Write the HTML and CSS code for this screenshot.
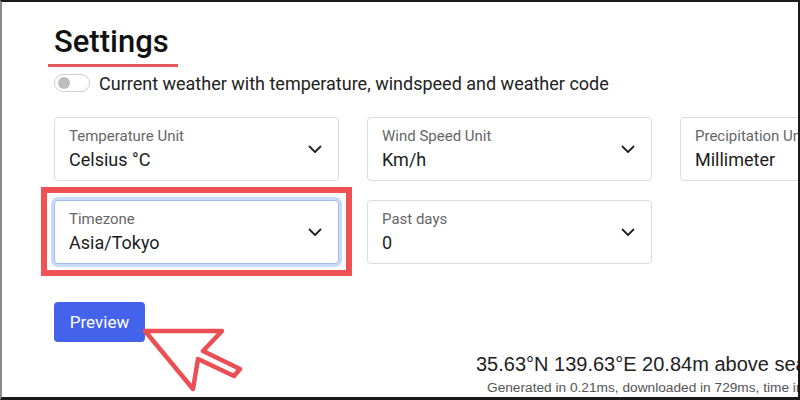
FILE: index.html
```html
<!DOCTYPE html>
<html lang="en">
<head>
<meta charset="utf-8">
<title>Settings</title>
<link rel="stylesheet" href="styles.css">
</head>
<body>
<div class="frame">
  <div class="content">
    <h1 class="title"><span class="title-text">Settings</span></h1>
    <label class="toggle-row">
      <span class="toggle"><span class="knob"></span></span>
      <span class="toggle-label">Current weather with temperature, windspeed and weather code</span>
    </label>
    <div class="grid">
      <div class="field">
        <div class="field-text">
          <span class="field-label">Temperature Unit</span>
          <span class="field-value">Celsius °C</span>
        </div>
        <svg class="chev" width="14" height="9" viewBox="0 0 14 9"><path d="M1.5 1.5 L7 7 L12.5 1.5" fill="none" stroke="#222" stroke-width="1.8" stroke-linecap="round" stroke-linejoin="round"/></svg>
      </div>
      <div class="field">
        <div class="field-text">
          <span class="field-label">Wind Speed Unit</span>
          <span class="field-value">Km/h</span>
        </div>
        <svg class="chev" width="14" height="9" viewBox="0 0 14 9"><path d="M1.5 1.5 L7 7 L12.5 1.5" fill="none" stroke="#222" stroke-width="1.8" stroke-linecap="round" stroke-linejoin="round"/></svg>
      </div>
      <div class="field">
        <div class="field-text">
          <span class="field-label">Precipitation Unit</span>
          <span class="field-value">Millimeter</span>
        </div>
        <svg class="chev" width="14" height="9" viewBox="0 0 14 9"><path d="M1.5 1.5 L7 7 L12.5 1.5" fill="none" stroke="#222" stroke-width="1.8" stroke-linecap="round" stroke-linejoin="round"/></svg>
      </div>
      <div class="field field-focus">
        <div class="field-text">
          <span class="field-label">Timezone</span>
          <span class="field-value">Asia/Tokyo</span>
        </div>
        <svg class="chev" width="14" height="9" viewBox="0 0 14 9"><path d="M1.5 1.5 L7 7 L12.5 1.5" fill="none" stroke="#222" stroke-width="1.8" stroke-linecap="round" stroke-linejoin="round"/></svg>
        <span class="highlight"></span>
      </div>
      <div class="field">
        <div class="field-text">
          <span class="field-label">Past days</span>
          <span class="field-value">0</span>
        </div>
        <svg class="chev" width="14" height="9" viewBox="0 0 14 9"><path d="M1.5 1.5 L7 7 L12.5 1.5" fill="none" stroke="#222" stroke-width="1.8" stroke-linecap="round" stroke-linejoin="round"/></svg>
      </div>
    </div>
    <div class="actions">
      <button class="btn">Preview</button>
      <svg class="cursor" width="110" height="75" viewBox="0 0 110 75"><path d="M3 3 L80 3 L61 23 L98 41 L92 48 L56 31 L51 61 Z" fill="#fff" stroke="#ec4f53" stroke-width="4.5" stroke-linejoin="round"/></svg>
    </div>
    <div class="footer">
      <div class="coords">35.63°N 139.63°E 20.84m above sea level</div>
      <div class="meta">Generated in 0.21ms, downloaded in 729ms, time in GMT+9</div>
    </div>
  </div>
</div>
</body>
</html>
```

FILE: styles.css
```css
* { box-sizing: border-box; }
html, body { margin: 0; padding: 0; background: #fff; }
.frame {
  width: 800px;
  height: 400px;
  border-top: 2px solid #1a1a1a;
  border-left: 2px solid #8a8a8a;
  border-right: 2px solid #1a1a1a;
  border-bottom: 3px solid #1a1a1a;
  overflow: hidden;
  position: relative;
  font-family: Roboto, "Liberation Sans", sans-serif;
  color: #222;
}
.content {
  padding: 25px 0 0 52px;
  width: 1100px;
}
.title {
  display: flex;
  margin: 0 0 0 -6px;
  font-size: 31px;
  font-weight: 500;
  line-height: 30px;
}
.title-text {
  display: block;
  padding: 0 9px 7px 6px;
  border-bottom: 3px solid #e4585c;
  color: #111;
}
.toggle-row {
  display: flex;
  align-items: center;
  gap: 9px;
  margin-top: 6px;
  height: 20px;
}
.toggle {
  width: 36px;
  height: 18px;
  border: 1px solid #cfcfcf;
  border-radius: 9px;
  display: flex;
  align-items: center;
  padding-left: 3px;
  background: #fff;
}
.knob {
  width: 12px;
  height: 12px;
  border-radius: 50%;
  background: #bdbdbd;
}
.toggle-label {
  font-size: 18px;
  color: #222;
}
.grid {
  display: grid;
  grid-template-columns: repeat(3, 285px);
  column-gap: 28px;
  row-gap: 19px;
  margin-top: 24px;
}
.field {
  position: relative;
  height: 64px;
  border: 1px solid #dcdcdc;
  border-radius: 4px;
  display: flex;
  align-items: center;
  justify-content: space-between;
  padding: 0 16px 0 14px;
  background: #fff;
}
.field-text {
  display: flex;
  flex-direction: column;
  gap: 4px;
}
.field-label {
  font-size: 15px;
  color: #666;
  line-height: 18px;
}
.field-value {
  font-size: 18px;
  color: #1c1c1c;
  line-height: 22px;
}
.chev { display: block; }
.field-focus {
  border-color: #9ebcf0;
  box-shadow: 0 0 0 3px #c7daf8;
}
.highlight {
  position: absolute;
  left: -14px;
  top: -14px;
  right: -14px;
  bottom: -13px;
  border: 6px solid #ef5155;
  pointer-events: none;
}
.actions {
  position: relative;
  margin-top: 38px;
  height: 40px;
}
.btn {
  width: 91px;
  height: 40px;
  border: none;
  border-radius: 4px;
  background: #4363ec;
  color: #fff;
  font-family: Roboto, sans-serif;
  font-size: 17px;
  padding: 0;
}
.cursor {
  position: absolute;
  left: 88px;
  top: 26px;
}
.footer {
  margin-top: 10px;
  padding-left: 422px;
  white-space: nowrap;
  font-family: "Liberation Sans", Arial, sans-serif;
}
.coords {
  font-size: 20px;
  color: #222;
  line-height: 24px;
}
.meta {
  margin-top: 3px;
  font-size: 13.7px;
  color: #555;
  line-height: 18px;
  padding-left: 11px;
}
```
